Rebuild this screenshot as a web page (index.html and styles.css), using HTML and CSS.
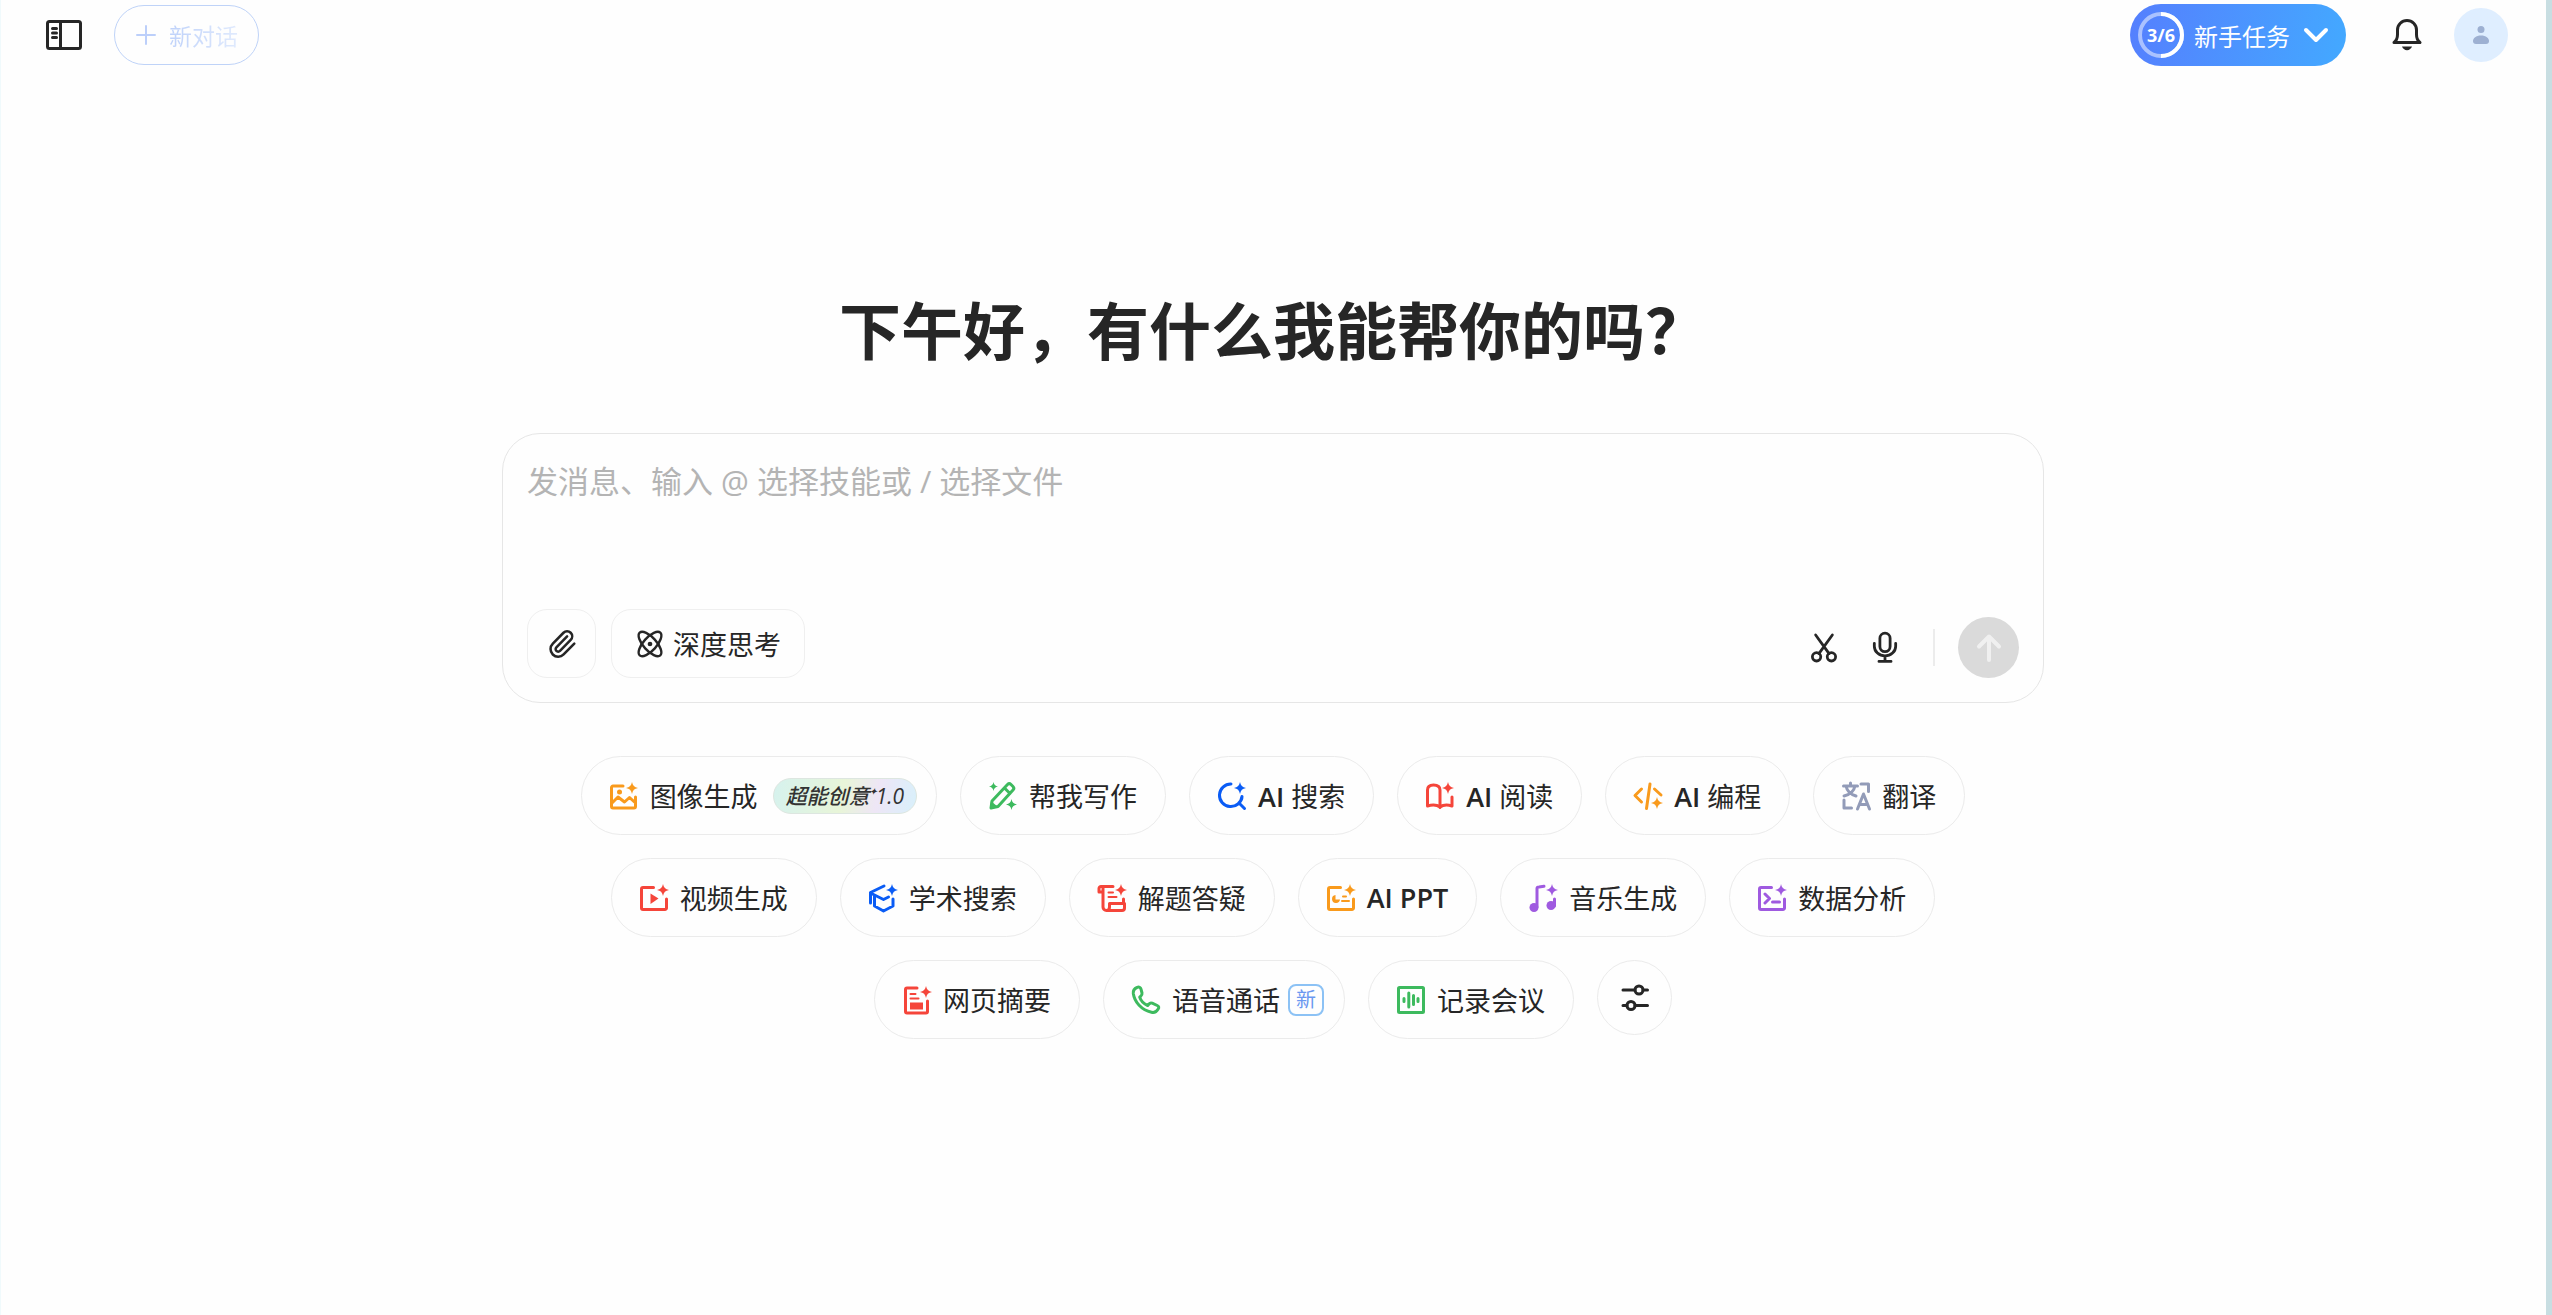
FILE: index.html
```html
<!DOCTYPE html>
<html lang="zh-CN">
<head>
<meta charset="utf-8">
<meta name="viewport" content="width=device-width, initial-scale=1">
<title>新对话</title>
<link rel="stylesheet" href="styles.css">
</head>
<body>
<svg class="defs" width="0" height="0" aria-hidden="true">
  <symbol id="spark" viewBox="0 0 12 12"><path fill="currentColor" d="M6 0C6.600 3.600 8.400 5.400 12 6C8.400 6.600 6.600 8.400 6 12C5.400 8.400 3.600 6.600 0 6C3.600 5.400 5.400 3.600 6 0Z"/></symbol>
</svg>
<div class="page">
  <header class="topbar">
    <div class="topbar-left">
      <button class="icon-button" aria-label="侧边栏">
        <svg class="icon-sidebar" viewBox="0 0 36 30"><rect x="1.5" y="1.5" width="33" height="27" rx="2"/><path d="M14.5 2v26M6.500 8.500h4M6.500 13h4M6.500 17.500h4"/></svg>
      </button>
      <button class="new-chat">
        <svg class="icon-plus" viewBox="0 0 20 20"><path d="M10 1v18M1 10h18"/></svg>
        <span class="new-chat-label">新对话</span>
      </button>
    </div>
    <div class="topbar-right">
      <button class="tasks">
        <span class="progress">
          <svg viewBox="0 0 46 46"><circle class="track" cx="23" cy="23" r="21"/><path d="M23 2a21 21 0 0 1 0 42"/></svg>
          <span class="progress-text">3/6</span>
        </span>
        <span>新手任务</span>
        <svg class="icon-chevron" viewBox="0 0 26 16"><path d="M3 3l10 10L23 3"/></svg>
      </button>
      <button class="icon-button bell" aria-label="通知">
        <svg class="icon-bell" viewBox="0 0 30 34"><path d="M2 24.500c2-1.500 3.500-4 3.500-8V12a9.500 9.500 0 0 1 19 0v4.500c0 4 1.500 6.500 3.500 8z"/><path class="solid" d="M10 28.500h10c-.8 2-2.600 3.700-5 3.700s-4.200-1.700-5-3.700z"/></svg>
      </button>
      <button class="avatar" aria-label="个人中心">
        <svg viewBox="0 0 16 18"><circle cx="8" cy="3.500" r="3.500"/><path d="M0 15c0-3 3-5.500 8-5.500s8 2.500 8 5.500c0 2-1 3-3 3H3c-2 0-3-1-3-3z"/></svg>
      </button>
    </div>
  </header>

  <main class="main">
    <h1 class="greeting">下午好，有什么我能帮你的吗？</h1>

    <form class="composer">
      <textarea class="message" aria-label="消息" placeholder="发消息、输入 @ 选择技能或 / 选择文件"></textarea>
      <div class="tools">
        <div class="tools-left">
          <button type="button" class="tool attach" aria-label="添加附件">
            <svg class="line-icon" viewBox="1 1 22 22"><path d="m16 6-8.414 8.586a2 2 0 0 0 2.829 2.829l8.414-8.586a4 4 0 1 0-5.657-5.657l-8.379 8.551a6 6 0 1 0 8.485 8.485l8.379-8.551"/></svg>
          </button>
          <button type="button" class="tool think">
            <svg class="line-icon" viewBox="1 1 22 22"><ellipse cx="12" cy="12" rx="13" ry="5.500" transform="rotate(48 12 12)"/><ellipse cx="12" cy="12" rx="13" ry="5.500" transform="rotate(-48 12 12)"/><circle class="dot" cx="12" cy="12" r="2"/></svg>
            <span>深度思考</span>
          </button>
        </div>
        <div class="tools-right">
          <button type="button" class="icon-button" aria-label="截图">
            <svg class="icon-action" viewBox="0 0 28 32"><circle cx="6" cy="25.500" r="4.500"/><circle cx="22" cy="25.500" r="4.500"/><path d="M5 2l14.500 20M23 2L8.500 22"/></svg>
          </button>
          <button type="button" class="icon-button" aria-label="语音输入">
            <svg class="icon-action" viewBox="0 0 28 32"><rect x="8.500" y="0" width="11" height="20" rx="5.500"/><path d="M2.500 11v3a11.500 10.500 0 0 0 23 0v-3M14 25v5M7.500 30.500h13"/></svg>
          </button>
          <span class="divider"></span>
          <button type="submit" class="send" aria-label="发送">
            <svg viewBox="0 0 24 28"><path d="M12 26V3M2 12.500L12 2.500l10 10"/></svg>
          </button>
        </div>
      </div>
    </form>

    <nav class="skills" aria-label="技能">
      <button class="chip chip-promo orange">
        <svg viewBox="0 0 28 28"><path d="M13 4H3a1.500 1.500 0 0 0-1.500 1.500v19A1.500 1.500 0 0 0 3 26h21a1.500 1.500 0 0 0 1.500-1.500V15M2 21l6-6 6.500 5 5-4.500 5.500 5"/><circle class="fill" cx="9.500" cy="10" r="2.500"/><use href="#spark" x="16" y="0" width="12" height="12"/></svg>
        <span class="label">图像生成</span>
        <span class="promo">超能创意<sup>✦</sup>1.0</span>
      </button>
      <button class="chip green">
        <svg viewBox="0 0 28 28"><path d="M2 26l1-7L18.500 2.500a2.500 2.500 0 0 1 3.500 0l2 2a2.500 2.500 0 0 1 0 3.500L9 24.500zM15.500 6l5.500 5.500"/><path class="fill" d="M2 19l7 6-8 2z"/><use href="#spark" x="0" y="0" width="9" height="9"/><use href="#spark" x="17" y="17" width="11" height="11"/></svg>
        <span class="label">帮我写作</span>
      </button>
      <button class="chip blue">
        <svg viewBox="0 0 28 28"><path d="M13 2a11.300 11.300 0 1 0 11 12.500c0 2.500-1 4.500-3 6.500l5.500 5.500"/><use href="#spark" x="16" y="0" width="12" height="12"/></svg>
        <span class="label"><span class="latin">AI</span> 搜索</span>
      </button>
      <button class="chip red">
        <svg viewBox="0 0 28 28"><path d="M14 25.500V8c0-3-2-5-6.500-5S1.500 5 1.500 8v16c5-1.500 9-1.500 12.500 1 3.500-2.500 7.500-2.500 12-1V15"/><use href="#spark" x="16" y="0" width="12" height="12"/></svg>
        <span class="label"><span class="latin">AI</span> 阅读</span>
      </button>
      <button class="chip orange">
        <svg viewBox="0 0 28 28"><path d="M7.500 7L1 13.500 7.500 20M16 2l-3.500 24.500M20.500 7l6.500 6"/><use href="#spark" x="17" y="15" width="12" height="12"/></svg>
        <span class="label"><span class="latin">AI</span> 编程</span>
      </button>
      <button class="chip slate">
        <svg viewBox="0 0 28 28"><path d="M1.500 4h14M8.500 1v3M4 4c1 5 5 8.500 10 10M13 4c-1 5-5 8.500-11 10M19 2h7.500v7.500M2 18v8h7.500M15.500 27l6-15 6 15M17.500 22.500h8"/></svg>
        <span class="label">翻译</span>
      </button>

      <button class="chip red">
        <svg viewBox="0 0 28 28"><path d="M13.500 3.500H3A1.500 1.500 0 0 0 1.500 5v19A1.500 1.500 0 0 0 3 25.500h22a1.500 1.500 0 0 0 1.500-1.500V15"/><path class="fill" d="M10.500 9.500l8 5-8 5.500z"/><use href="#spark" x="17" y="0" width="12" height="12"/></svg>
        <span class="label">视频生成</span>
      </button>
      <button class="chip blue">
        <svg viewBox="0 0 28 28"><path d="M15 2L1.500 8.500V19M1.500 9l13 6.500 5-2.500M5.500 12v10l9 5 9.500-5v-7"/><use href="#spark" x="17" y="0" width="12" height="12"/></svg>
        <span class="label">学术搜索</span>
      </button>
      <button class="chip red">
        <svg viewBox="0 0 28 28"><path d="M15 2.500H3A2 2 0 0 0 1 4.500V8h4M5 3v20a3.500 3.500 0 0 0 3.500 3.500H24a2.500 2.500 0 0 0 2.500-2.500v-4.500h-15V23c0 2-1 3.500-3 3.500M25.500 15v4"/><path class="thin" d="M10.500 8.500h4.500M10.500 13h8"/><use href="#spark" x="17" y="0" width="12" height="12"/></svg>
        <span class="label">解题答疑</span>
      </button>
      <button class="chip orange">
        <svg viewBox="0 0 28 28"><path d="M13.500 3.500H3A1.500 1.500 0 0 0 1.500 5v19A1.500 1.500 0 0 0 3 25.500h22a1.500 1.500 0 0 0 1.500-1.500V15"/><path class="fill" d="M8.500 11v4.500H13a4 4 0 1 1-4.500-4.500z"/><path class="thin" d="M16 12.500h3M15 17h7"/><use href="#spark" x="17" y="0" width="12" height="12"/></svg>
        <span class="label latin">AI PPT</span>
      </button>
      <button class="chip purple">
        <svg viewBox="0 0 28 28"><path d="M8 23V4.500Q8 3 10 3l5-.8M25.500 15v7"/><circle class="fill" cx="5" cy="23.500" r="4.500"/><circle class="fill" cx="22" cy="21.500" r="4.500"/><use href="#spark" x="17" y="0" width="12" height="12"/></svg>
        <span class="label">音乐生成</span>
      </button>
      <button class="chip purple">
        <svg viewBox="0 0 28 28"><path d="M13.500 3.500H3A1.500 1.500 0 0 0 1.500 5v19A1.500 1.500 0 0 0 3 25.500h22a1.500 1.500 0 0 0 1.500-1.500V15M7 10l4.500 4.500L7 19M14.500 18h7"/><use href="#spark" x="17" y="0" width="12" height="12"/></svg>
        <span class="label">数据分析</span>
      </button>

      <button class="chip red">
        <svg viewBox="0 0 28 28"><path d="M14 2H4A1.500 1.500 0 0 0 2.500 3.500v22A1.500 1.500 0 0 0 4 27h19a1.500 1.500 0 0 0 1.500-1.500V15"/><path class="thin" d="M7.500 8h5M7.500 12.500h8"/><path class="fill" d="M7 16.500h13v7H7z"/><use href="#spark" x="17" y="0" width="12" height="12"/></svg>
        <span class="label">网页摘要</span>
      </button>
      <button class="chip chip-new green">
        <svg viewBox="0 0 28 28"><path d="M5 1.500c2-1 3.500-.2 4 1.700l1 3.800c.3 1.500-.2 2.500-1.500 3.500l-.8.700c1 3.500 4 6.600 8 8.300l1.300-1.500c.8-1 2-1.200 3.200-.8l5 2.300c1.600.7 2 2 1 3.500-1.500 2.500-3.700 4-6.700 3.200C9.500 24 2.500 16 1.300 7.500 1 4.500 2.500 2.500 5 1.500z"/></svg>
        <span class="label">语音通话</span>
        <span class="new-tag">新</span>
      </button>
      <button class="chip green">
        <svg viewBox="0 0 28 28"><rect x="1.500" y="1.500" width="25" height="25" rx="1"/><path d="M7 12.500v3M11.800 7v14M16.500 9.500v9M21 12.500v3"/></svg>
        <span class="label">记录会议</span>
      </button>
      <button class="chip-settings" aria-label="设置">
        <svg viewBox="0 0 28 28"><circle cx="18" cy="6" r="4"/><path d="M2 6h12M22 6h4.500"/><circle cx="10" cy="21.500" r="4"/><path d="M2 21.500h4M14 21.500h12.500"/></svg>
      </button>
    </nav>
  </main>
</div>
</body>
</html>
```

FILE: styles.css
```css
* { box-sizing: border-box; }

body {
  margin: 0;
  background: #fefefe;
  color: #262626;
  font-family: "Open Sans", "Noto Sans CJK SC", sans-serif;
}

button {
  margin: 0;
  padding: 0;
  border: 0;
  background: none;
  color: inherit;
  font: inherit;
  cursor: pointer;
}

svg {
  display: block;
  flex: none;
  overflow: visible;
  fill: none;
  stroke: currentColor;
  stroke-linecap: round;
  stroke-linejoin: round;
}

.defs { position: absolute; }

.page {
  min-height: 100vh;
  border-right: 6px solid #c8dee2;
  box-shadow: inset 1px 0 #f0fafc;
}

/* Top bar */
.topbar {
  display: flex;
  align-items: center;
  justify-content: space-between;
  padding: 4px 38px 0 46px;
}

.topbar-left,
.topbar-right {
  display: flex;
  align-items: center;
  gap: 32px;
}

.icon-sidebar {
  width: 36px;
  height: 30px;
  stroke-width: 3;
}

.new-chat {
  display: flex;
  align-items: center;
  gap: 13px;
  height: 60px;
  padding: 0 20px 0 21px;
  border: 1px solid #bfd3f8;
  border-radius: 30px;
  font-size: 23px;
}

.icon-plus {
  width: 20px;
  height: 20px;
  color: #bccffa;
  stroke-width: 2;
}

.new-chat-label {
  background: linear-gradient(90deg, #bfd2fa, #e0eafd);
  background-clip: text;
  color: transparent;
}

.tasks {
  display: flex;
  align-items: center;
  height: 62px;
  margin-right: 14px;
  padding: 0 17px 0 8px;
  border-radius: 31px;
  background: linear-gradient(100deg, #557ffe, #43a9ff);
  color: #fff;
  font-size: 24px;
}

.progress {
  display: grid;
  place-items: center;
  margin-right: 10px;
  font-size: 18px;
  font-weight: 700;
}

.progress > * { grid-area: 1 / 1; }

.progress svg {
  width: 46px;
  height: 46px;
  stroke-width: 4;
  stroke-linecap: butt;
}

.track { opacity: 0.5; }

.icon-chevron {
  width: 26px;
  height: 16px;
  margin-left: 13px;
  stroke-width: 4;
}

.icon-bell {
  width: 30px;
  height: 34px;
  stroke-width: 3;
}

.solid {
  fill: currentColor;
  stroke: none;
}

.avatar {
  display: grid;
  place-items: center;
  width: 54px;
  height: 54px;
  border-radius: 50%;
  background: #dfeeff;
  color: #9db0d2;
}

.avatar svg {
  width: 16px;
  height: 18px;
  fill: currentColor;
  stroke: none;
}

/* Greeting and composer */
.main {
  display: flex;
  flex-direction: column;
  align-items: center;
  padding: 223px 24px 48px;
}

.greeting {
  margin: 0 0 60px;
  font-size: 62px;
  font-weight: 700;
  line-height: 84px;
}

.composer {
  display: flex;
  flex-direction: column;
  width: 100%;
  max-width: 1542px;
  min-height: 270px;
  padding: 24px;
  border: 1px solid #e6e6e6;
  border-radius: 38px;
}

.message {
  flex: 1;
  width: 100%;
  padding: 0;
  border: 0;
  outline: 0;
  background: none;
  color: inherit;
  font: inherit;
  font-size: 31px;
  line-height: 47px;
  resize: none;
}

.message::placeholder {
  color: #b4b4b4;
  opacity: 1;
}

.tools,
.tools-left,
.tools-right {
  display: flex;
  align-items: center;
}

.tools {
  align-items: flex-end;
  justify-content: space-between;
}

.tools-left { gap: 15px; }
.tools-right { gap: 35px; }

.tool {
  display: flex;
  align-items: center;
  justify-content: center;
  gap: 10px;
  height: 69px;
  border: 1px solid #efefef;
  border-radius: 20px;
  font-size: 27px;
}

.attach { width: 69px; }
.think { padding: 0 23px 0 25px; }

.line-icon {
  width: 26px;
  height: 26px;
  stroke-width: 2;
}

.attach .line-icon {
  width: 28px;
  height: 28px;
}

.dot {
  fill: currentColor;
  stroke: none;
}

.icon-action {
  width: 26px;
  height: 32px;
  stroke-width: 3;
}

.divider {
  width: 2px;
  height: 37px;
  background: #ececec;
}

.send {
  display: grid;
  place-items: center;
  width: 61px;
  height: 61px;
  margin-left: -12px;
  border-radius: 50%;
  background: #dadada;
  color: #f0f0f0;
}

.send svg {
  width: 24px;
  height: 28px;
  stroke-width: 4;
}

/* Skill chips */
.skills {
  display: flex;
  flex-wrap: wrap;
  justify-content: center;
  gap: 23px;
  max-width: 1440px;
  margin-top: 53px;
}

.chip {
  display: flex;
  align-items: center;
  gap: 12px;
  height: 79px;
  padding: 0 28px;
  border: 1px solid #ebebeb;
  border-radius: 40px;
  font-size: 27px;
}

.chip svg {
  width: 28px;
  height: 28px;
  stroke-width: 3;
}

.chip .fill {
  fill: currentColor;
  stroke: none;
}

.chip .thin { stroke-width: 2; }

.chip use { stroke: none; }

.label {
  color: #262626;
  white-space: nowrap;
}

.latin { font-weight: 600; }

.orange { color: #f99a1c; }
.green { color: #3dba5e; }
.blue { color: #0a5cf5; }
.red { color: #f5453a; }
.slate { color: #929bb8; }
.purple { color: #9f5ae0; }

.chip-promo { padding-right: 19px; }

.promo {
  height: 36px;
  margin-left: 3px;
  padding: 0 12px;
  border: 1px solid #dde6e0;
  border-radius: 18px;
  background: linear-gradient(100deg, #d6f2ee, #e8f5d8 48%, #eee6f6 72%, #d8f0fb);
  color: #333;
  font-size: 21px;
  font-style: italic;
  font-weight: 500;
  line-height: 34px;
  white-space: nowrap;
}

.promo sup {
  margin: 0 -1px;
  font-size: 10px;
  line-height: 0;
  vertical-align: 9px;
}

.chip-new { padding-right: 20px; }

.new-tag {
  width: 36px;
  height: 32px;
  margin-left: -4px;
  border: 2px solid #8cc2f5;
  border-radius: 8px;
  color: #6a98f0;
  font-size: 20px;
  line-height: 28px;
  text-align: center;
}

.chip-settings {
  display: grid;
  place-items: center;
  width: 75px;
  height: 75px;
  border: 1px solid #ebebeb;
  border-radius: 50%;
}

.chip-settings svg {
  width: 28px;
  height: 28px;
  stroke-width: 3;
}
```
